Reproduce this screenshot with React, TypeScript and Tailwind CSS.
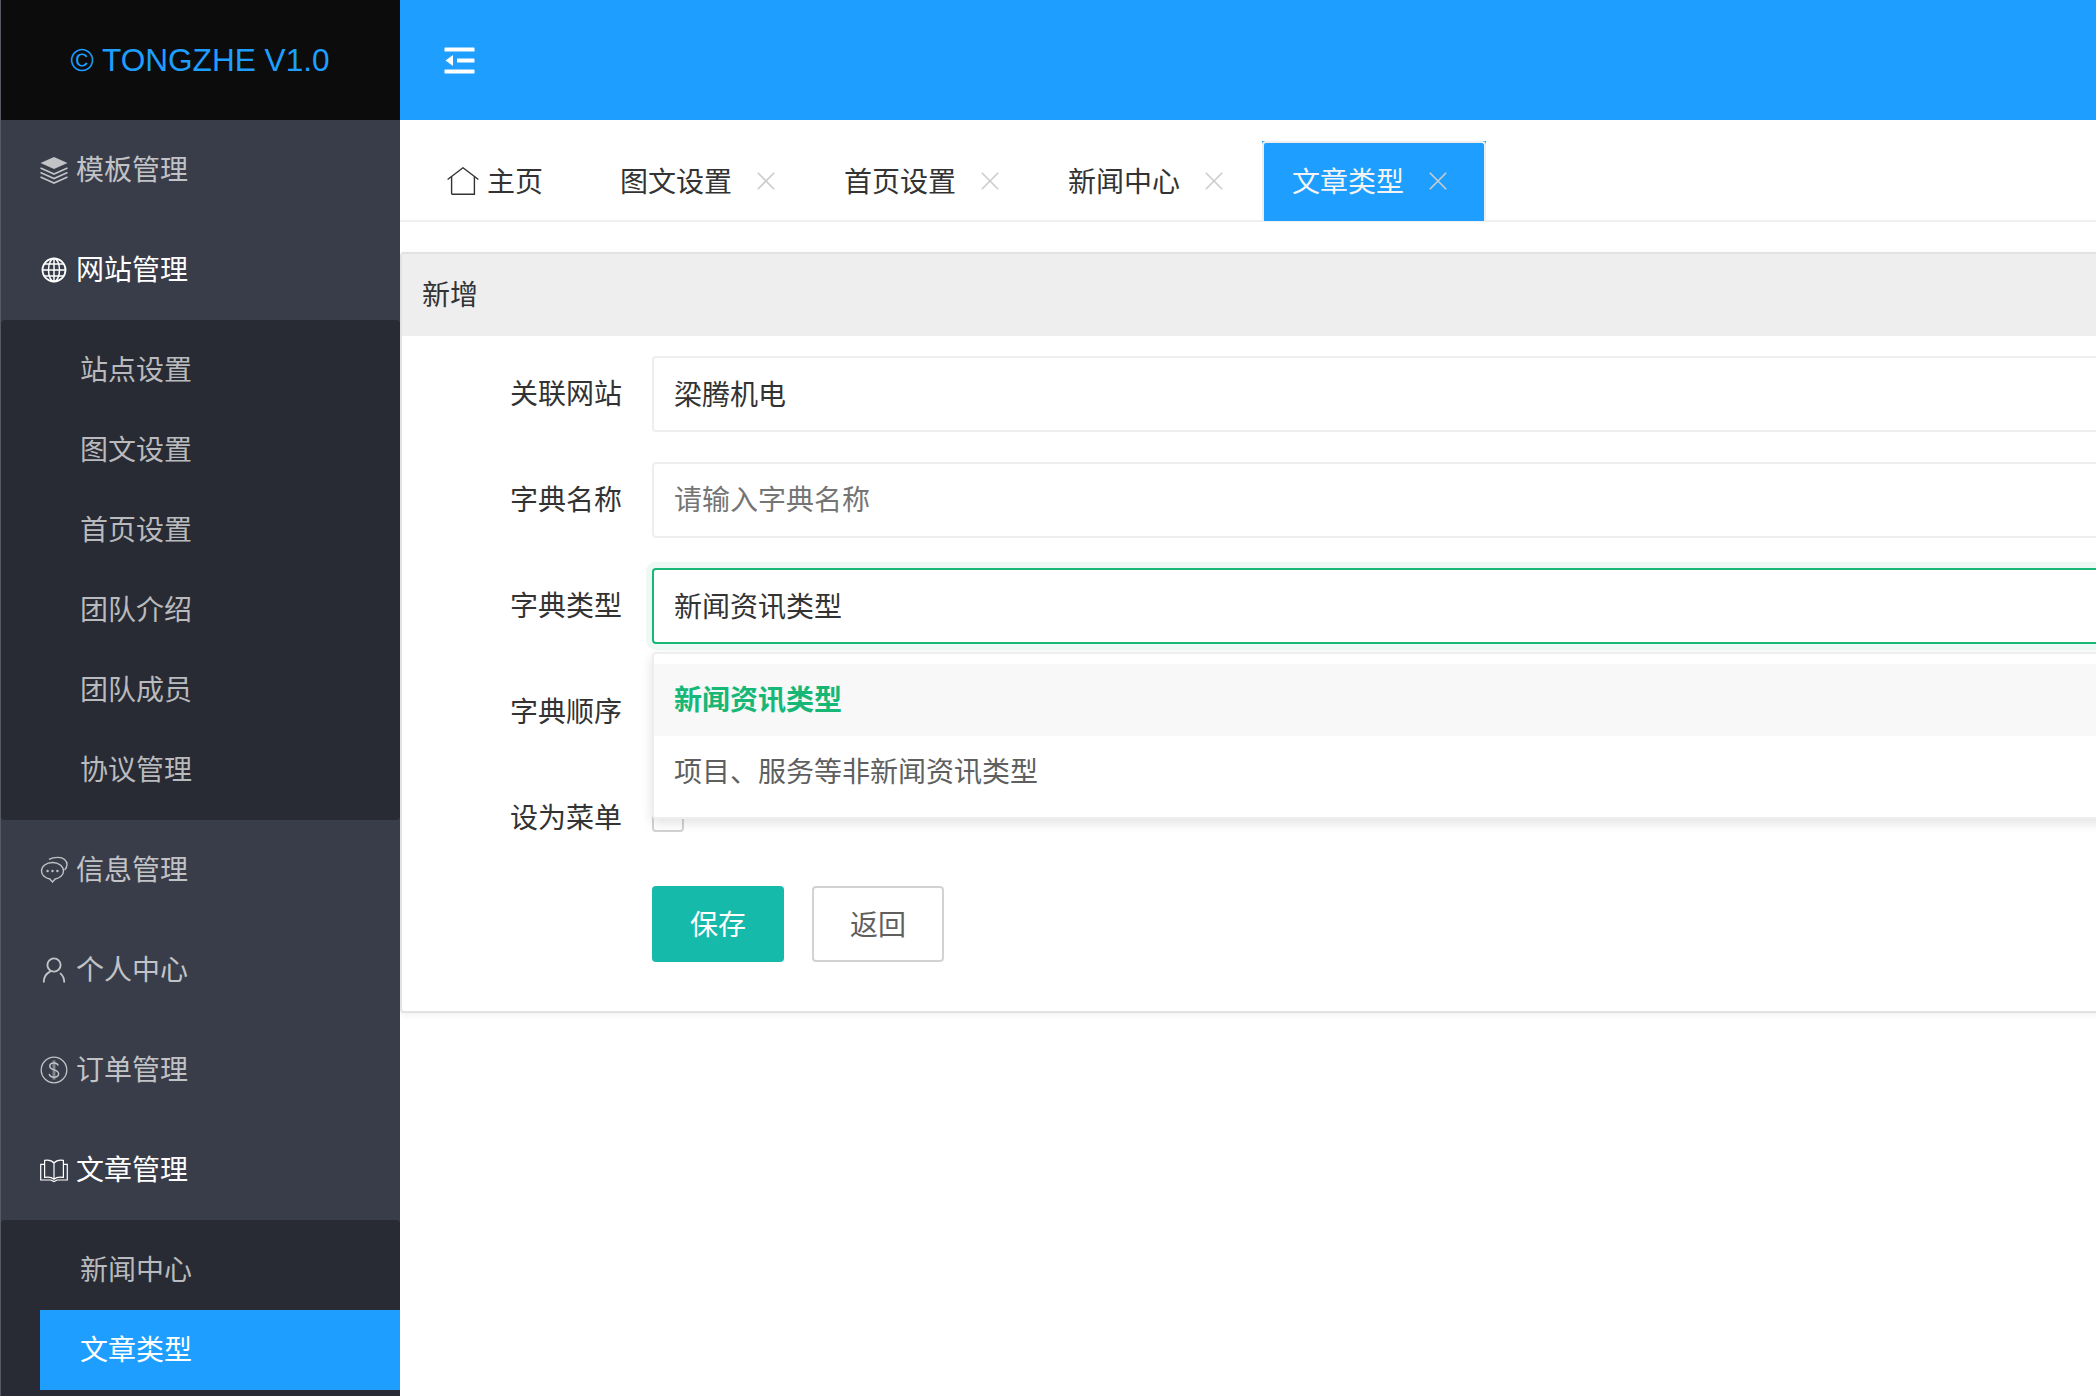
import React from 'react';

const LayersIcon = () => (
  <svg width="28" height="28" viewBox="0 0 28 28" fill="none" stroke="currentColor" strokeWidth="1.6">
    <path d="M14 1 L27.5 7 L14 13 L0.5 7 Z" fill="currentColor" stroke="none" />
    <path d="M0.5 12 L14 18 L27.5 12" />
    <path d="M0.5 16.5 L14 22.5 L27.5 16.5" />
    <path d="M0.5 21 L14 27 L27.5 21" />
  </svg>
);

const GlobeIcon = () => (
  <svg width="28" height="28" viewBox="0 0 28 28" fill="none" stroke="currentColor" strokeWidth="1.5">
    <circle cx="14" cy="14" r="11.5" strokeWidth="1.8" />
    <ellipse cx="14" cy="14" rx="5.5" ry="11.5" />
    <path d="M14 2.5 V25.5 M2.5 14 H25.5 M4 8 H24 M4 20 H24" />
  </svg>
);

const ChatIcon = () => (
  <svg width="28" height="28" viewBox="0 0 28 28" fill="none" stroke="currentColor" strokeWidth="1.4">
    <path d="M12.5 6.5 C18.8 6.5 23.5 10.2 23.5 15 C23.5 19.2 19.6 22.4 15.2 23 L12.5 26 L9.8 23 C5.4 22.4 1.5 19.2 1.5 15 C1.5 10.2 6.2 6.5 12.5 6.5 Z" />
    <path d="M9 3.4 C11.5 2 14.6 1.4 18 1.4 C23.5 1.4 27 4.6 27 8.6 C27 10.8 26 12.6 24.6 14" />
    <circle cx="7.6" cy="15" r="1.2" fill="currentColor" stroke="none" />
    <circle cx="12.5" cy="15" r="1.2" fill="currentColor" stroke="none" />
    <circle cx="17.4" cy="15" r="1.2" fill="currentColor" stroke="none" />
  </svg>
);

const UserIcon = () => (
  <svg width="28" height="28" viewBox="0 0 28 28" fill="none" stroke="currentColor" strokeWidth="1.9">
    <circle cx="14" cy="9" r="6.6" />
    <path d="M3.8 25.8 C3.8 21 6.6 17.4 10 15.6 M24.2 25.8 C24.2 22.6 22.8 19.6 20.6 17.6" strokeLinecap="round" />
  </svg>
);

const DollarIcon = () => (
  <svg width="28" height="28" viewBox="0 0 28 28" fill="none" stroke="currentColor" strokeWidth="1.3">
    <circle cx="14" cy="14" r="12.8" />
    <path d="M18.2 9.6 C17.6 7.8 16 7 14 7 C11.6 7 9.8 8.2 9.8 10.2 C9.8 15 18.6 12.8 18.6 17.8 C18.6 20 16.6 21.2 14 21.2 C11.6 21.2 9.8 20.2 9.2 18" strokeWidth="1.5" />
    <path d="M13.2 4.4 V23.6 M14.8 4.4 V23.6" strokeWidth="0.8" />
  </svg>
);

const BookIcon = () => (
  <svg width="28" height="28" viewBox="0 0 28 28" fill="none" stroke="currentColor" strokeWidth="1.2">
    <path d="M14 7 C12 4.6 8.4 3.8 4.6 4.4 V21.4 C8.4 20.8 12 21.4 14 23.2 C16 21.4 19.6 20.8 23.4 21.4 V4.4 C19.6 3.8 16 4.6 14 7 Z M14 7 V23.2" />
    <path d="M4.6 8.4 H0.7 V24 H10.8 L14 25.6 L17.2 24 H27.3 V8.4 H23.4" />
  </svg>
);

const HomeIcon = () => (
  <svg width="32" height="28" viewBox="0 0 32 28" fill="none" stroke="#333333" strokeWidth="1.4">
    <path d="M0.6 12.5 L16 0.8 L31.4 12.5" />
    <path d="M4.6 9.5 V26.6 Q4.6 27.3 5.3 27.3 H27.4 V9.5" />
  </svg>
);

const CloseIcon = () => (
  <svg width="18" height="18" viewBox="0 0 18 18" fill="none" stroke="#cccccc" strokeWidth="1.6">
    <path d="M0.8 0.8 L17.2 17.2 M17.2 0.8 L0.8 17.2" />
  </svg>
);

const FoldIcon = () => (
  <svg width="31" height="27" viewBox="0 0 31 27" fill="white">
    <rect x="0.5" y="0.5" width="30" height="4" rx="0.6" />
    <rect x="13" y="11.5" width="17.5" height="4" rx="0.6" />
    <rect x="0.5" y="22.5" width="30" height="4" rx="0.6" />
    <path d="M9 8 V19 L1.5 13.5 Z" />
  </svg>
);

const NavGroup = ({ icon, label, active }: { icon: React.ReactNode; label: string; active?: boolean }) => (
  <div className={`h-[100px] pl-[39px] flex items-center gap-2 ${active ? 'text-white' : 'text-[#c2c3c7]'}`}>
    {icon}
    <span className="pt-[2px]">{label}</span>
  </div>
);

const SubPanel = ({ items, current }: { items: string[]; current?: string }) => (
  <div className="bg-[#282b33] rounded-[4px] py-[10px]">
    {items.map((item) =>
      item === current ? (
        <div key={item} className="h-[80px] ml-[39px] pl-[40px] pt-[2px] flex items-center bg-[#1e9fff] text-white">
          {item}
        </div>
      ) : (
        <div key={item} className="h-[80px] pl-[79px] pt-[2px] flex items-center text-[#b9babd]">
          {item}
        </div>
      )
    )}
  </div>
);

const Tab = ({ label }: { label: string }) => (
  <div className="w-[224px] h-[80px] pl-[30px] flex items-center text-[#333333]">
    <span className="w-[137px] pt-[3px]">{label}</span>
    <CloseIcon />
  </div>
);

const FormRow = ({ label, children }: { label: string; children: React.ReactNode }) => (
  <div className="flex items-center gap-[30px] mb-[30px]">
    <label className="w-[220px] pt-[2px] text-right text-[#333333] shrink-0">{label}</label>
    <div className="flex-1 relative">{children}</div>
  </div>
);

const inputClass = 'w-full h-[76px] px-[20px] border-2 border-[#eeeeee] rounded-[4px] bg-white text-[#333333] outline-none placeholder:text-[#757575]';

export default function App() {
  return (
    <div className="flex w-[2096px] h-[1396px] overflow-hidden bg-white text-[28px] font-['Liberation_Sans','Noto_Sans_CJK_SC',sans-serif]">
      {/* Sidebar */}
      <aside className="w-[400px] shrink-0 bg-[#393d49] border-l border-white/15 overflow-hidden">
        <div className="h-[120px] -ml-px pt-[2px] bg-[#0c0c0c] flex items-center justify-center text-[31.6px] text-[#1e9fff]">
          © TONGZHE V1.0
        </div>
        <NavGroup icon={<LayersIcon />} label="模板管理" />
        <NavGroup icon={<GlobeIcon />} label="网站管理" active />
        <SubPanel items={['站点设置', '图文设置', '首页设置', '团队介绍', '团队成员', '协议管理']} />
        <NavGroup icon={<ChatIcon />} label="信息管理" />
        <NavGroup icon={<UserIcon />} label="个人中心" />
        <NavGroup icon={<DollarIcon />} label="订单管理" />
        <NavGroup icon={<BookIcon />} label="文章管理" active />
        <SubPanel items={['新闻中心', '文章类型']} current="文章类型" />
      </aside>

      {/* Main */}
      <main className="flex-1 min-w-0 overflow-hidden">
        <header className="h-[120px] bg-[#1e9fff] pl-[44px] flex items-center">
          <FoldIcon />
        </header>

        {/* Tabs */}
        <div className="h-[102px] pl-[17px] flex items-start pt-[21px] border-b-2 border-[#f0f0f0]">
          <div className="w-[173px] h-[80px] pl-[30px] flex items-center gap-[8px] text-[#333333]">
            <HomeIcon />
            <span className="pt-[3px]">主页</span>
          </div>
          <Tab label="图文设置" />
          <Tab label="首页设置" />
          <Tab label="新闻中心" />
          <div className="relative w-[224px] h-[80px] pl-[30px] flex items-center bg-[#1e9fff] text-[#f4f4f4]">
            <span className="w-[137px] pt-[3px]">文章类型</span>
            <CloseIcon />
            <div className="absolute inset-0 border-2 border-b-0 border-[#eeeeee] rounded-t-[4px]" />
          </div>
        </div>

        {/* Card */}
        <div className="mt-[30px] w-[1760px] border-2 border-[#e2e2e2] rounded-[4px] bg-white shadow-[0_2px_6px_rgba(0,0,0,0.06)]">
          <div className="h-[82px] px-[20px] pt-[2px] flex items-center bg-[#eeeeee] text-[#333333]">新增</div>
          <div className="pt-[20px] pb-[49px]">
            <FormRow label="关联网站">
              <input className={`${inputClass} pb-[2px]`} defaultValue="梁腾机电" readOnly />
            </FormRow>
            <FormRow label="字典名称">
              <input className={`${inputClass} pt-[2px]`} placeholder="请输入字典名称" readOnly />
            </FormRow>
            <FormRow label="字典类型">
              <input
                className="w-full h-[76px] px-[20px] pb-[2px] border-2 border-[#16b777] rounded-[4px] bg-white text-[#333333] outline-none shadow-[0_0_0_6px_rgba(22,183,119,0.08)]"
                defaultValue="新闻资讯类型"
                readOnly
              />
              {/* open dropdown */}
              <div className="absolute z-10 left-0 right-0 top-[84px] h-[167px] py-[10px] border-2 border-[#eeeeee] rounded-[4px] bg-white shadow-[0_4px_12px_rgba(0,0,0,0.12)]">
                <div className="h-[72px] px-[20px] pt-[2px] flex items-center bg-[#f8f8f8] text-[#16b777] font-bold">新闻资讯类型</div>
                <div className="h-[72px] px-[20px] pt-[2px] flex items-center text-[#5f5f5f]">项目、服务等非新闻资讯类型</div>
              </div>
            </FormRow>
            <FormRow label="字典顺序">
              <input className={inputClass} placeholder="请输入字典顺序" readOnly />
            </FormRow>
            <FormRow label="设为菜单">
              <div className="h-[76px] pb-[4px] flex items-center">
                <div className="w-[32px] h-[32px] border-2 border-[#d2d2d2] rounded-[4px] bg-white" />
              </div>
            </FormRow>
            <div className="pl-[250px] flex gap-[28px]">
              <button className="w-[132px] h-[76px] pt-[3px] rounded-[4px] bg-[#16baaa] text-white">保存</button>
              <button className="w-[132px] h-[76px] pt-[3px] rounded-[4px] border-2 border-[#d2d2d2] bg-white text-[#5f5f5f]">返回</button>
            </div>
          </div>
        </div>
      </main>
    </div>
  );
}
